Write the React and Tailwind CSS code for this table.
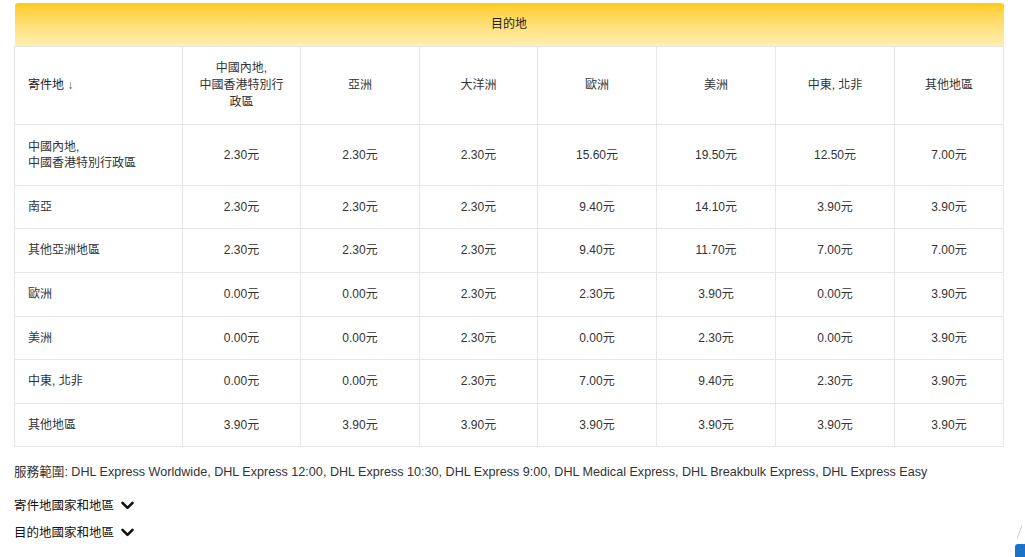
import React from "react";

const cols = ["中國內地,\n中國香港特別行\n政區", "亞洲", "大洋洲", "歐洲", "美洲", "中東, 北非", "其他地區"];
const rows = [
  ["中國內地,\n中國香港特別行政區", ["2.30", "2.30", "2.30", "15.60", "19.50", "12.50", "7.00"], "h-[61px]"],
  ["南亞", ["2.30", "2.30", "2.30", "9.40", "14.10", "3.90", "3.90"], "h-[43px]"],
  ["其他亞洲地區", ["2.30", "2.30", "2.30", "9.40", "11.70", "7.00", "7.00"], "h-[44px]"],
  ["歐洲", ["0.00", "0.00", "2.30", "2.30", "3.90", "0.00", "3.90"], "h-[44px]"],
  ["美洲", ["0.00", "0.00", "2.30", "0.00", "2.30", "0.00", "3.90"], "h-[43px]"],
  ["中東, 北非", ["0.00", "0.00", "2.30", "7.00", "9.40", "2.30", "3.90"], "h-[44px]"],
  ["其他地區", ["3.90", "3.90", "3.90", "3.90", "3.90", "3.90", "3.90"], "h-[43px]"],
];
const widths = [168, 118, 119, 118, 119, 119, 119, 109];

function Chevron() {
  return (
    <svg width="13" height="9" viewBox="0 0 13 9" className="ml-[7px]">
      <path d="M1.5 1.8 L6.5 6.8 L11.5 1.8" fill="none" stroke="#111" strokeWidth="2.6" strokeLinecap="round" strokeLinejoin="round" />
    </svg>
  );
}

export default function App() {
  return (
    <div className="relative w-[1025px] h-[557px] overflow-hidden bg-white text-[#333] text-[13px]" style={{ fontFamily: '"Liberation Sans", Arial, "Noto Sans CJK TC", sans-serif' }}>
      <div className="pt-[3px] pl-[14px]">
        <table className="w-[989px] border-collapse table-fixed">
          <colgroup>
            {widths.map((w, i) => (
              <col key={i} style={{ width: w }} />
            ))}
          </colgroup>
          <thead>
            <tr>
              <th colSpan={8} className="h-[43px] rounded-t-[3px] bg-gradient-to-b from-[#ffcc00] to-[#fff0b0] font-normal text-[12px] text-[#222] text-center">
                目的地
              </th>
            </tr>
            <tr className="h-[78px]">
              <th className="border border-[#e6e6e6] text-left pl-[13px] font-normal text-[12px] text-[#222]">寄件地 <span className="text-[#555]">↓</span></th>
              {cols.map((c, i) => (
                <th key={i} className="border border-[#e6e6e6] text-center font-normal text-[12px] leading-[17px] text-[#333] whitespace-pre-line px-[6px]">
                  {c}
                </th>
              ))}
            </tr>
          </thead>
          <tbody>
            {rows.map(([label, vals, h], i) => (
              <tr key={i} className={h}>
                <td className="border border-[#e6e6e6] text-left pl-[13px] text-[12px] leading-[16px] whitespace-pre-line text-[#333]">{label}</td>
                {vals.map((v, j) => (
                  <td key={j} className="border border-[#e6e6e6] text-center text-[12px] text-[#333]">
                    {v}元
                  </td>
                ))}
              </tr>
            ))}
          </tbody>
        </table>
        <p className="mt-[17px] text-[12.6px] text-[#333] leading-[16px]">
          服務範圍: DHL Express Worldwide, DHL Express 12:00, DHL Express 10:30, DHL Express 9:00, DHL Medical Express, DHL Breakbulk Express, DHL Express Easy
        </p>
        <div className="mt-[18px] flex items-center text-[12.5px] text-[#111] leading-[16px]">
          寄件地國家和地區 <Chevron />
        </div>
        <div className="mt-[11px] flex items-center text-[12.5px] text-[#111] leading-[16px]">
          目的地國家和地區 <Chevron />
        </div>
      </div>
      <div className="absolute left-[1015px] top-[544px] w-[20px] h-[20px] rounded-[3px] bg-[#1a73c8]" />
      <div className="absolute left-[1019px] top-[525px] w-[1px] h-[14px] bg-[#ccc] rotate-[20deg]" />
    </div>
  );
}
